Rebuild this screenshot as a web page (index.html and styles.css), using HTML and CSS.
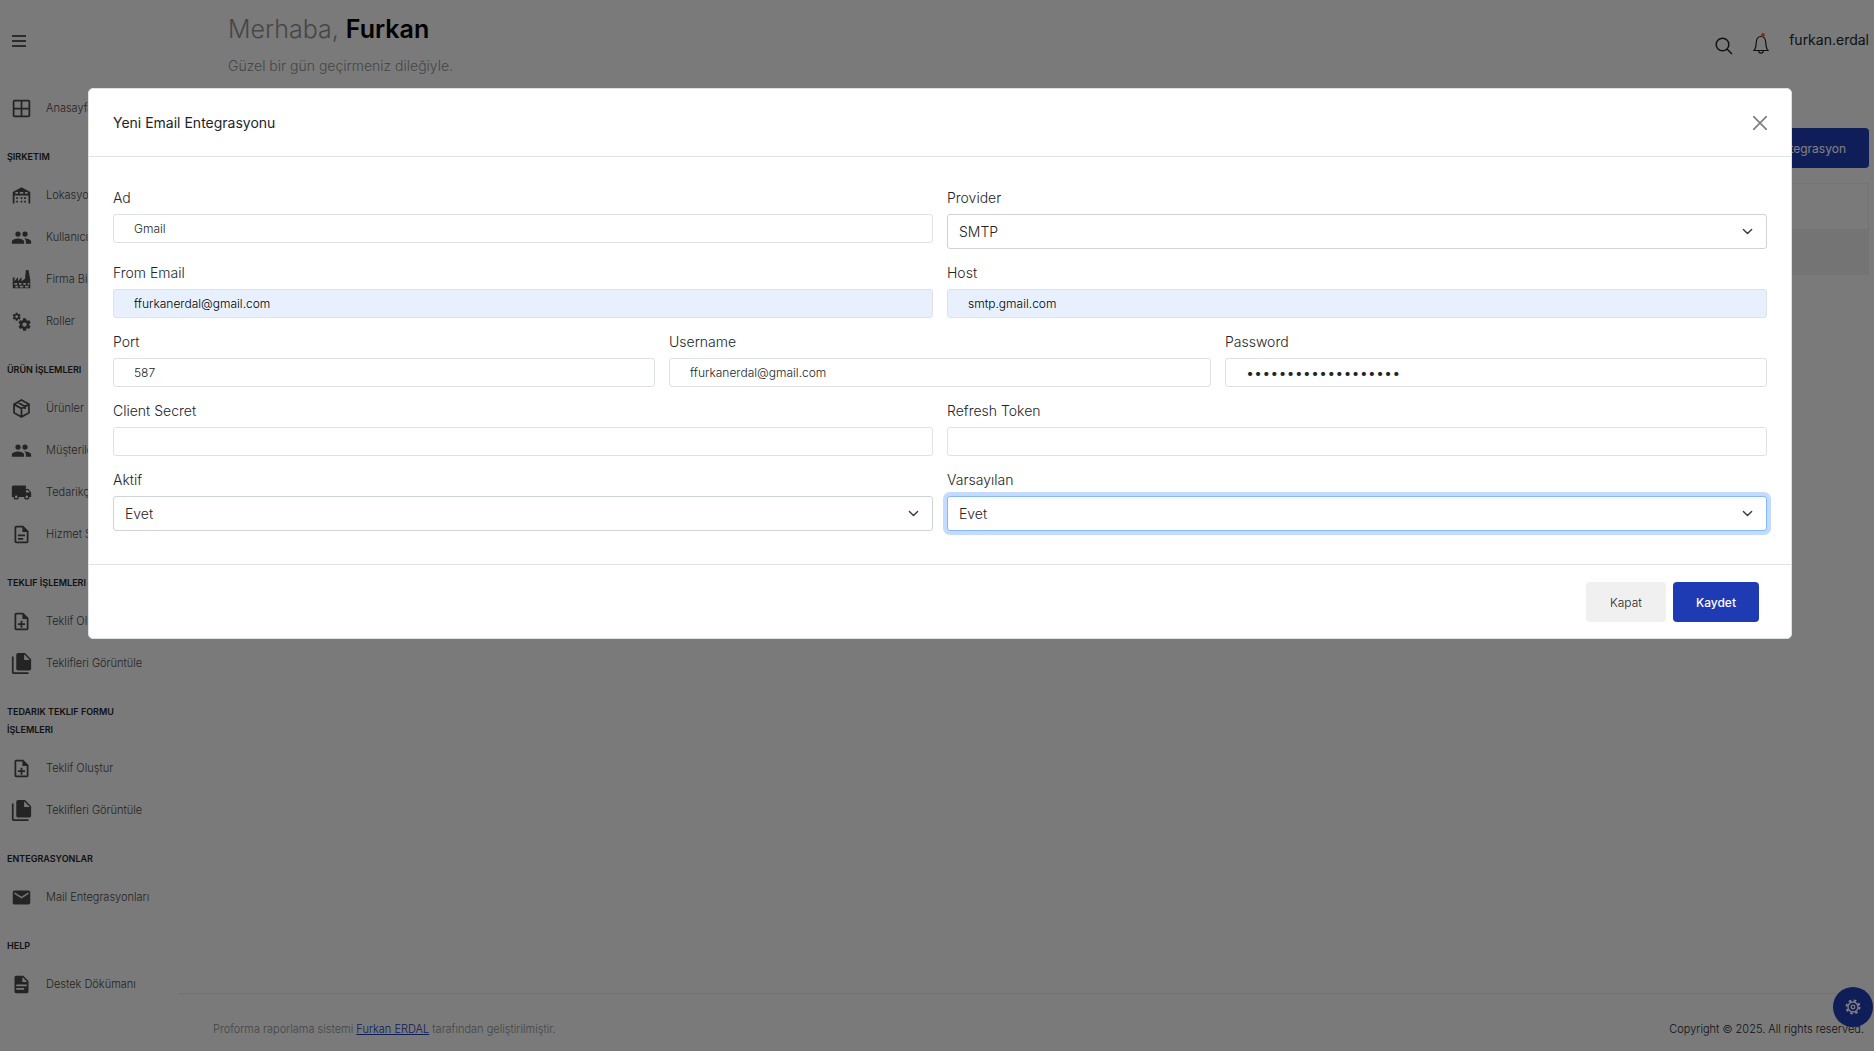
FILE: index.html
```html
<!DOCTYPE html>
<html lang="tr">
<head>
<meta charset="utf-8">
<meta name="viewport" content="width=device-width, initial-scale=1">
<title>Mail Entegrasyonları</title>
<link rel="stylesheet" href="styles.css">
</head>
<body>
<svg class="sprite" aria-hidden="true">
  <symbol id="i-people" viewBox="0 0 24 24"><path d="M16 11a3 3 0 1 0 0-6 3 3 0 0 0 0 6zm-8 0a3 3 0 1 0 0-6 3 3 0 0 0 0 6zm0 2c-2.300 0-7 1.200-7 3.500V19h14v-2.500C15 14.200 10.300 13 8 13zm8 0c-.3 0-.6 0-1 .1 1.200.8 2 2 2 3.400V19h6v-2.500c0-2.300-4.700-3.500-7-3.500z"/></symbol>
  <symbol id="i-file-plus" viewBox="0 0 24 24"><path d="M14 2H6a2 2 0 0 0-2 2v16c0 1.100.9 2 2 2h12a2 2 0 0 0 2-2V8l-6-6zm4 18H6V4h7v5h5v11zM11 11h2v3h3v2h-3v3h-2v-3H8v-2h3v-3z"/></symbol>
  <symbol id="i-files" viewBox="0 0 24 24"><path d="M16 0H8a2 2 0 0 0-2 2v16c0 1.100.9 2 2 2h13a2 2 0 0 0 2-2V7l-7-7zm-1 8V1.500L21.500 8H15zM3 4H1v18c0 1.100.9 2 2 2h17v-2H3V4z"/></symbol>
  <symbol id="i-gear" viewBox="0 0 24 24"><path d="M12 15.500A3.500 3.500 0 0 1 8.500 12 3.500 3.500 0 0 1 12 8.500a3.500 3.500 0 0 1 3.500 3.500 3.500 3.500 0 0 1-3.500 3.500m7.430-2.530c.04-.32.07-.64.07-.97s-.03-.66-.07-1l2.110-1.630c.19-.15.24-.42.12-.64l-2-3.460c-.12-.22-.39-.31-.61-.22l-2.490 1c-.52-.39-1.060-.73-1.690-.98l-.37-2.650A.506.506 0 0 0 14 2h-4c-.25 0-.46.18-.5.42l-.37 2.650c-.63.25-1.170.59-1.690.98l-2.490-1c-.22-.09-.49 0-.61.22l-2 3.460c-.13.22-.07.49.12.64L4.570 11c-.04.34-.07.67-.07 1s.03.65.07.97l-2.110 1.660c-.19.15-.25.42-.12.64l2 3.460c.12.22.39.3.61.22l2.490-1.010c.52.4 1.060.74 1.690.99l.37 2.650c.04.24.25.42.5.42h4c.25 0 .46-.18.5-.42l.37-2.650c.63-.26 1.170-.59 1.690-.99l2.490 1.010c.22.08.49 0 .61-.22l2-3.460c.12-.22.07-.49-.12-.64z"/></symbol>
</svg>

<div class="app">
  <header class="topbar">
    <button class="icon-btn menu-btn" aria-label="Menü"><svg viewBox="0 0 14 12" width="14" height="12"><path d="M0 1h14M0 6h14M0 11h14" stroke="currentColor" stroke-width="1.500"/></svg></button>
    <div class="welcome">
      <h1>Merhaba, <b>Furkan</b></h1>
      <p>Güzel bir gün geçirmeniz dileğiyle.</p>
    </div>
    <div class="tools">
      <button class="icon-btn" aria-label="Ara"><svg viewBox="0 0 18 18" width="18" height="18" fill="none" stroke="currentColor" stroke-width="1.500"><circle cx="7.500" cy="7.500" r="6.300"/><path d="M12 12l5 5"/></svg></button>
      <button class="icon-btn bell" aria-label="Bildirimler"><svg viewBox="0 0 16 20" width="16" height="20" fill="none" stroke="currentColor" stroke-width="1.200"><path d="M1 16.500c2-1.800 2-4 2.300-8.500C3.600 4.500 5.300 2.500 8 2.500s4.400 2 4.700 5.500c.3 4.500.3 6.700 2.300 8.500zM5.500 16.700c.3 1.700 1.200 2.500 2.500 2.500s2.200-.8 2.500-2.500"/></svg><span class="dot"></span></button>
      <span class="user">furkan.erdal</span>
    </div>
  </header>

  <div class="shell">
    <nav class="sidebar">
      <a href="#"><svg viewBox="0 0 24 24"><path d="M4 2h16a2 2 0 0 1 2 2v16a2 2 0 0 1-2 2H4a2 2 0 0 1-2-2V4a2 2 0 0 1 2-2zm9 2v7h7V4h-7zm-2 0H4v7h7V4zm2 16h7v-7h-7v7zm-2 0v-7H4v7h7z"/></svg>Anasayfa</a>
      <h2>ŞIRKETIM</h2>
      <a href="#"><svg viewBox="0 0 24 24"><path d="M2 21V8l10-5.500L22 8v13h-2V12H4v9zM5 8v2h3V8zm5 0v2h4V8zm6 0v2h3V8zM6 14h2v2H6zm5 0h2v2h-2zm4 0h2v2h-2zM6 18h2v2H6zm5 0h2v2h-2zm4 0h2v2h-2z"/></svg>Lokasyonlar</a>
      <a href="#"><svg viewBox="0 0 24 24"><use href="#i-people"/></svg>Kullanıcılar</a>
      <a href="#"><svg viewBox="0 0 24 24"><path d="M2 22V10l2-1v5l4-5v5l4-5v5l4-3 1-10h3l2 11v10H2zm2-6v2h3v-2H4zm5 0v2h3v-2H9zm5 0v2h3v-2h-3zm5 0v2h2v-2h-2zM5 19v2h3v-2H5zm5 0v2h4v-2h-4zm6 0v2h4v-2h-4z"/></svg>Firma Bilgileri</a>
      <a href="#"><svg viewBox="0 0 24 24"><use href="#i-gear" x="1" y="1" width="11" height="11"/><use href="#i-gear" x="7" y="7" width="17" height="17"/></svg>Roller</a>
      <h2>ÜRÜN İŞLEMLERI</h2>
      <a href="#"><svg viewBox="0 0 24 24"><path d="M12 2.300l8.500 4.800v9.800L12 21.700l-8.500-4.800V7.100zM3.500 7.300L12 12l8.500-4.700M12 12v9.500M7.500 4.900l8.500 4.800v3" fill="none" stroke="currentColor" stroke-width="2"/></svg>Ürünler</a>
      <a href="#"><svg viewBox="0 0 24 24"><use href="#i-people"/></svg>Müşteriler</a>
      <a href="#"><svg viewBox="0 0 24 24"><path d="M18 18.500a1.500 1.500 0 1 0 0-3 1.500 1.500 0 0 0 0 3zm1.500-9H17V12h4.500l-2-2.500zM6 18.500a1.500 1.500 0 1 0 0-3 1.500 1.500 0 0 0 0 3zM20 8l3 4v5h-2a3 3 0 0 1-6 0H9a3 3 0 0 1-6 0H1V6c0-1.100.9-2 2-2h14v4h3z"/></svg>Tedarikçiler</a>
      <a href="#"><svg viewBox="0 0 24 24"><path d="M14 2H6a2 2 0 0 0-2 2v16c0 1.100.9 2 2 2h12a2 2 0 0 0 2-2V8l-6-6zm4 18H6V4h7v5h5v11zM8 12h8v2H8zm0 4h6v2H8z"/></svg>Hizmet Şartları</a>
      <h2>TEKLIF İŞLEMLERI</h2>
      <a href="#"><svg viewBox="0 0 24 24"><use href="#i-file-plus"/></svg>Teklif Oluştur</a>
      <a href="#"><svg viewBox="0 0 24 24"><use href="#i-files"/></svg>Teklifleri Görüntüle</a>
      <h2>TEDARIK TEKLIF FORMU İŞLEMLERI</h2>
      <a href="#"><svg viewBox="0 0 24 24"><use href="#i-file-plus"/></svg>Teklif Oluştur</a>
      <a href="#"><svg viewBox="0 0 24 24"><use href="#i-files"/></svg>Teklifleri Görüntüle</a>
      <h2>ENTEGRASYONLAR</h2>
      <a href="#"><svg viewBox="0 0 24 24"><path d="M20 8l-8 5-8-5V6l8 5 8-5m0-2H4a2 2 0 0 0-2 2v12c0 1.100.9 2 2 2h16a2 2 0 0 0 2-2V6a2 2 0 0 0-2-2z"/></svg>Mail Entegrasyonları</a>
      <h2>HELP</h2>
      <a href="#"><svg viewBox="0 0 24 24"><path d="M13 9h5.500L13 3.500V9M6 2h8l6 6v12a2 2 0 0 1-2 2H6a2 2 0 0 1-2-2V4c0-1.100.9-2 2-2m9 16v-2H6v2h9m3-4v-2H6v2h12z"/></svg>Destek Dökümanı</a>
    </nav>

    <div class="main">
      <main>
        <button class="btn btn-primary new-btn">Yeni Entegrasyon</button>
        <div class="list"><div></div><div></div></div>
      </main>
      <footer class="page-footer">
        <span>Proforma raporlama sistemi <a href="#">Furkan ERDAL</a> tarafından geliştirilmiştir.</span>
        <span class="copy">Copyright © 2025. All rights reserved.</span>
      </footer>
    </div>
  </div>
  <button class="settings" aria-label="Ayarlar"><svg viewBox="0 0 16 16" width="16" height="16" fill="none" stroke="currentColor"><circle cx="8" cy="8" r="5" stroke-width="1.400"/><circle cx="8" cy="8" r="6.500" stroke-width="2" stroke-dasharray="2.550 2.550"/><circle cx="8" cy="8" r="1.800" stroke-width="1.300"/></svg></button>
</div>

<div class="backdrop">
  <div class="modal" role="dialog" aria-modal="true" aria-labelledby="modal-title">
    <div class="modal-header">
      <h2 id="modal-title">Yeni Email Entegrasyonu</h2>
      <button class="close" aria-label="Kapat"><svg viewBox="0 0 14 14" width="14" height="14"><path d="M0.700 0.700l12.600 12.600M13.300 0.700L0.700 13.300" stroke="currentColor" stroke-width="1.700" stroke-linecap="round"/></svg></button>
    </div>
    <form class="modal-body">
      <div class="row">
        <div class="field"><label for="ad">Ad</label><input id="ad" type="text" value="Gmail"></div>
        <div class="field"><label for="provider">Provider</label><select id="provider"><option>SMTP</option></select></div>
      </div>
      <div class="row">
        <div class="field"><label for="from">From Email</label><input id="from" class="filled" type="email" value="ffurkanerdal@gmail.com"></div>
        <div class="field"><label for="host">Host</label><input id="host" class="filled" type="text" value="smtp.gmail.com"></div>
      </div>
      <div class="row">
        <div class="field"><label for="port">Port</label><input id="port" type="text" value="587"></div>
        <div class="field"><label for="username">Username</label><input id="username" type="text" value="ffurkanerdal@gmail.com"></div>
        <div class="field"><label for="password">Password</label><input id="password" type="password" value="xxxxxxxxxxxxxxxxxxx"></div>
      </div>
      <div class="row">
        <div class="field"><label for="secret">Client Secret</label><input id="secret" type="text"></div>
        <div class="field"><label for="token">Refresh Token</label><input id="token" type="text"></div>
      </div>
      <div class="row">
        <div class="field"><label for="aktif">Aktif</label><select id="aktif"><option>Evet</option><option>Hayır</option></select></div>
        <div class="field"><label for="varsayilan">Varsayılan</label><select id="varsayilan" class="focused"><option>Evet</option><option>Hayır</option></select></div>
      </div>
    </form>
    <div class="modal-footer">
      <button class="btn btn-light">Kapat</button>
      <button class="btn btn-primary">Kaydet</button>
    </div>
  </div>
</div>
</body>
</html>
```
FILE: styles.css
```css
* { box-sizing: border-box; }

body {
  margin: 0;
  background: #f4f5f7;
  color: #212529;
  font-family: Inter, "Liberation Sans", sans-serif;
  font-size: 14px;
  font-weight: 300;
}

button, input, select { font: inherit; color: inherit; }
button { cursor: pointer; }
h1, h2, p { margin: 0; font-weight: 300; }
.sprite { display: none; }

.app {
  display: flex;
  flex-direction: column;
  min-height: 100vh;
  background: #f4f4f4;
}

/* Top bar */
.topbar {
  display: flex;
  height: 87px;
  padding: 0 5px 0 12px;
}
.icon-btn {
  display: flex;
  padding: 0;
  border: 0;
  background: none;
}
.menu-btn { width: 216px; padding-top: 35px; }
.welcome { flex: 1; color: #8d8d8d; }
.welcome h1 { font-size: 25px; line-height: 36px; padding-top: 11px; }
.welcome b { color: #000; font-weight: 600; }
.welcome p { font-size: 14px; line-height: 20px; padding-top: 9px; }
.tools { display: flex; gap: 20px; padding-top: 30px; }
.tools .icon-btn { align-self: flex-start; margin-top: 7px; }
.tools .bell { position: relative; margin-top: 4px; }
.dot {
  position: absolute;
  top: -1px;
  left: 8px;
  width: 4px;
  height: 4px;
  border-radius: 50%;
  background: #f95f53;
}
.user { line-height: 20px; font-weight: 400; }

/* Sidebar */
.shell { display: flex; flex: 1; }
.sidebar { width: 178px; flex: none; }
.sidebar a {
  display: flex;
  align-items: center;
  gap: 14px;
  height: 42px;
  padding-left: 11px;
  color: #484848;
  font-size: 11px;
  text-decoration: none;
  white-space: nowrap;
}
.sidebar svg { width: 21px; height: 21px; fill: currentColor; }
.sidebar h2 {
  padding: 19px 30px 8px 7px;
  font-size: 9px;
  font-weight: 600;
  line-height: 18px;
}

/* Page content */
.main { display: flex; flex: 1; flex-direction: column; }
main {
  display: flex;
  flex: 1;
  flex-direction: column;
  padding: 41px 5px 0 35px;
}
.new-btn { align-self: flex-end; }
.list { margin-top: 15px; border: 1px solid #e6e6e6; }
.list div { height: 45px; }
.list div + div { border-top: 1px solid #e6e6e6; background: #e8e8e8; }
.page-footer {
  display: flex;
  justify-content: space-between;
  height: 58px;
  padding: 26px 10px 0 35px;
  border-top: 1px solid #e2e2e2;
  color: #8d8d8d;
  font-size: 11px;
  line-height: 18px;
}
.page-footer a { color: #1f3bb3; }
.copy { color: #212529; }
.settings {
  position: fixed;
  right: 1px;
  bottom: 24px;
  display: grid;
  place-items: center;
  width: 40px;
  height: 40px;
  padding: 0;
  border: 0;
  border-radius: 50%;
  background: #1f3bb3;
  color: #fff;
}

/* Buttons */
.btn {
  height: 40px;
  padding: 0 23px;
  border: 0;
  border-radius: 4px;
  font-size: 12px;
  white-space: nowrap;
}
.btn-primary { background: #1f3bb3; color: #fff; font-weight: 400; }
.btn-light { background: #f0f0f0; }
.modal-footer .btn { min-width: 80px; }
.modal-footer .btn-primary { min-width: 85px; font-weight: 500; }

/* Modal */
.backdrop {
  position: fixed;
  inset: 0;
  padding: 88px 82px 0 88px;
  background: rgba(0, 0, 0, 0.5);
}
.modal {
  border: 1px solid #dee2e6;
  border-radius: 5px;
  background: #fff;
}
.modal-header {
  display: flex;
  align-items: center;
  justify-content: space-between;
  height: 68px;
  padding: 0 24px;
  border-bottom: 1px solid #dee2e6;
}
.modal-header h2 { font-size: 14px; font-weight: 400; line-height: 20px; }
.close {
  display: flex;
  padding: 0;
  border: 0;
  background: none;
  color: #7f7f7f;
}
.modal-body {
  display: grid;
  gap: 14px;
  padding: 31px 24px 33px;
}
.row {
  display: grid;
  grid-auto-columns: minmax(0, 1fr);
  grid-auto-flow: column;
  align-items: start;
  gap: 14px;
}
.field { display: grid; gap: 6px; }
.field label { line-height: 20px; }
.field input, .field select {
  width: 100%;
  border: 1px solid #dee2e6;
  border-radius: 3px;
  background-color: #fff;
  outline: 0;
}
.field input { height: 29px; padding: 0 20px; font-size: 12px; }
.field input[type="password"] { font-family: Lato, sans-serif; font-size: 14px; }
.field .filled { background-color: #e8f0fe; color: #000; }
.field select {
  height: 35px;
  padding: 0 11px;
  border-color: #ced4da;
  appearance: none;
  background-image: url("data:image/svg+xml,%3Csvg xmlns='http://www.w3.org/2000/svg' viewBox='0 0 16 16'%3E%3Cpath fill='none' stroke='%23343a40' stroke-linecap='round' stroke-linejoin='round' stroke-width='2' d='m2 5 6 6 6-6'/%3E%3C/svg%3E");
  background-position: right 13px center;
  background-repeat: no-repeat;
  background-size: 11px 11px;
}
.field .focused { border-color: #86b7fe; box-shadow: 0 0 0 4px #c2dbfe; }
.modal-footer {
  display: flex;
  justify-content: flex-end;
  gap: 7px;
  padding: 17px 32px 16px;
  border-top: 1px solid #dee2e6;
}
```
